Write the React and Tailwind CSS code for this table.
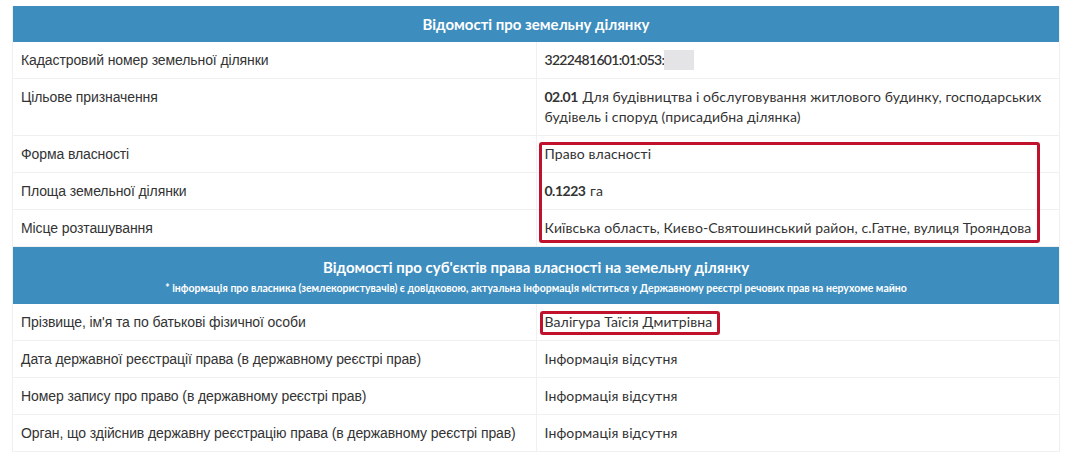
import React from "react";

const rowsTop = [
  {
    label: "Кадастровий номер земельної ділянки",
    value: (
      <span className="inline-flex items-center">
        <b className="font-semibold tracking-[-0.7px]">3222481601:01:053:</b>
        <span className="inline-block w-[30px] h-[20px] bg-[#e4e4e7]" />
      </span>
    ),
  },
  {
    label: "Цільове призначення",
    value: (
      <>
        <b className="tracking-[-0.5px] mr-[1px]">02.01</b> Для будівництва і обслуговування житлового будинку,
        господарських будівель і споруд (присадибна ділянка)
      </>
    ),
  },
  { label: "Форма власності", value: "Право власності" },
  {
    label: "Площа земельної ділянки",
    value: (
      <>
        <b className="tracking-[-0.5px] mr-[1px]">0.1223</b> га
      </>
    ),
  },
  {
    label: "Місце розташування",
    value: "Київська область, Києво-Святошинський район, с.Гатне, вулиця Трояндова",
  },
];

const rowsBottom = [
  { label: "Прізвище, ім'я та по батькові фізичної особи", value: "Валігура Таїсія Дмитрівна" },
  { label: "Дата державної реєстрації права (в державному реєстрі прав)", value: "Інформація відсутня" },
  { label: "Номер запису про право (в державному реєстрі прав)", value: "Інформація відсутня" },
  { label: "Орган, що здійснив державну реєстрацію права (в державному реєстрі прав)", value: "Інформація відсутня" },
];

function Row({ label, value }) {
  return (
    <tr className="border-b border-[#f0f0f0]">
      <td className="w-1/2 align-top px-2 py-2 leading-[20px] text-[14px] text-[#333] font-['Liberation_Sans',Arial,sans-serif] tracking-[-0.1px] border-r border-[#f0f0f0]">
        {label}
      </td>
      <td className="w-1/2 align-top px-2 py-2 leading-[20px] text-[14px] text-[#333] font-['Lato',sans-serif] tracking-[0.1px]">
        {value}
      </td>
    </tr>
  );
}

export default function App() {
  return (
    <div className="bg-white w-[1076px] h-[456px] pt-[6px] pl-[12px]">
      <div className="relative w-[1048px]">
        <table className="w-full border-collapse border-x border-[#f0f0f0] table-fixed">
          <tbody>
            <tr>
              <th
                colSpan={2}
                className="bg-[#3d8dbe] text-white h-[36px] text-center font-['Lato',sans-serif] font-bold text-[15px]"
              >
                Відомості про земельну ділянку
              </th>
            </tr>
            {rowsTop.map((r) => (
              <Row key={r.label} {...r} />
            ))}
            <tr>
              <th
                colSpan={2}
                className="bg-[#3d8dbe] text-white h-[57px] text-center font-['Lato',sans-serif] font-bold"
              >
                <div className="text-[15px] leading-[20px] pt-[2px]">
                  Відомості про суб'єктів права власності на земельну ділянку
                </div>
                <div className="text-[10.5px] leading-[14px] mt-[4px]">
                  * інформація про власника (землекористувачів) є довідковою, актуальна інформація міститься у Державному реєстрі речових прав на нерухоме майно
                </div>
              </th>
            </tr>
            {rowsBottom.map((r) => (
              <Row key={r.label} {...r} />
            ))}
          </tbody>
        </table>

        <div className="absolute left-[527px] top-[136px] w-[501px] h-[101px] border-[3px] border-[#c0122c] rounded-[3px] pointer-events-none" />
        <div className="absolute left-[528px] top-[305px] w-[180px] h-[24px] border-[3px] border-[#c0122c] rounded-[3px] pointer-events-none" />
      </div>
    </div>
  );
}
